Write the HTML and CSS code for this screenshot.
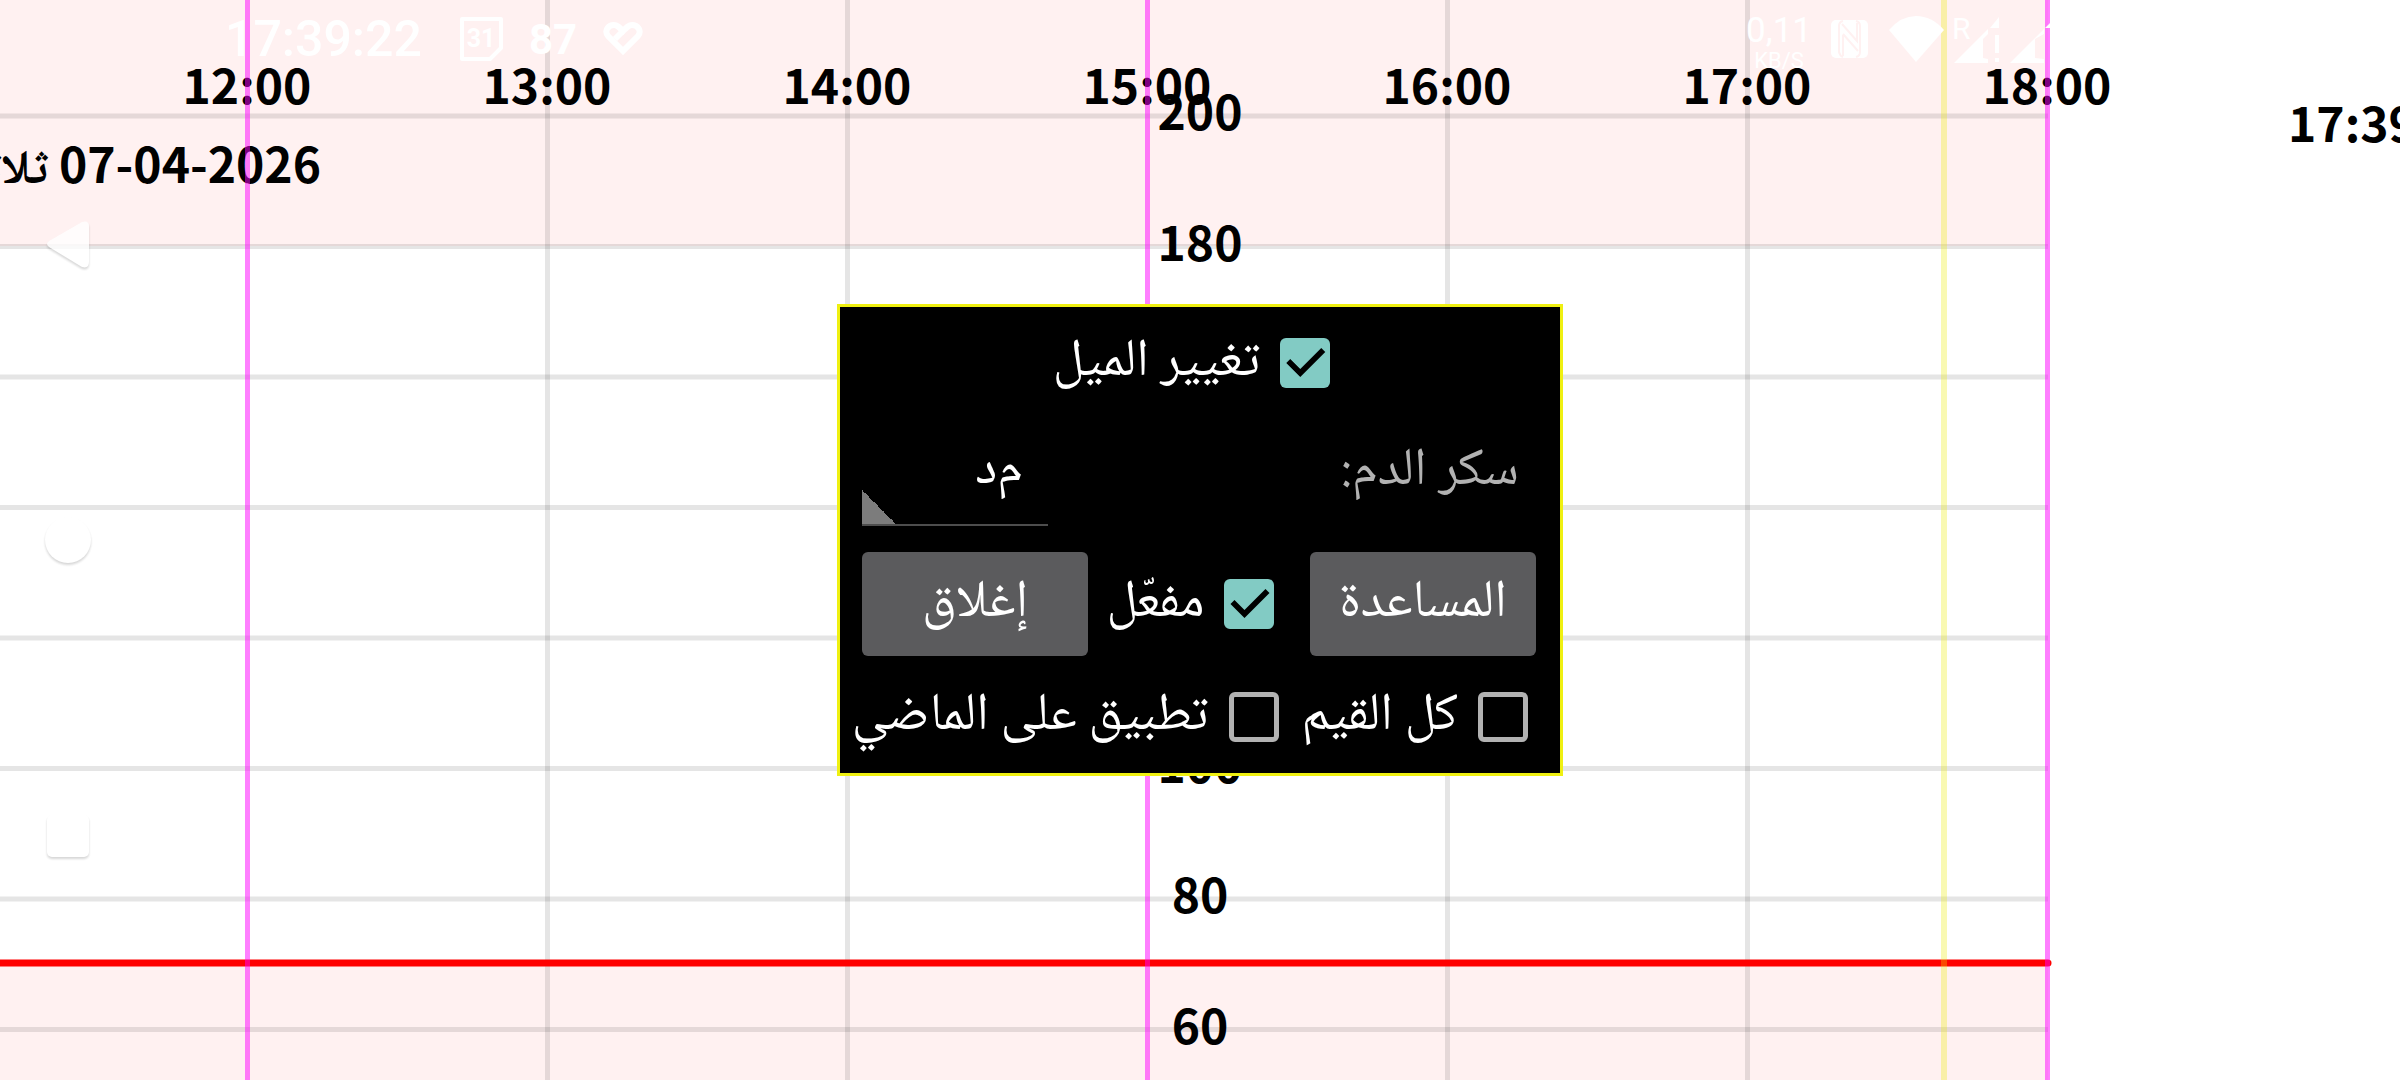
FILE: index.html
```html
<!DOCTYPE html>
<html lang="ar" dir="rtl">
<head>
  <meta charset="UTF-8" />
  <meta name="viewport" content="width=device-width, initial-scale=1.0" />
  <title>سكر الدم</title>
  <link rel="stylesheet" href="styles.css">
</head>
<body>
  <!-- Glucose curve background -->
  <svg class="chart" viewBox="0 0 2400 1080" direction="ltr">
    <rect class="out-of-range" x="0" y="0" width="2048" height="246" />
    <rect class="out-of-range" x="0" y="963" width="2048" height="117" />

    <g class="label">
      <text x="247" y="104">12:00</text>
      <text x="547" y="104">13:00</text>
      <text x="847" y="104">14:00</text>
      <text x="1147" y="104">15:00</text>
      <text x="1447" y="104">16:00</text>
      <text x="1747" y="104">17:00</text>
      <text x="2047" y="104">18:00</text>
      <text x="1200" y="130">200</text>
      <text x="1200" y="261">180</text>
      <text x="1200" y="783">100</text>
      <text x="1200" y="913">80</text>
      <text x="1200" y="1044">60</text>
      <text class="now" x="2288" y="142">17:39</text>
      <text class="date" x="321" y="183">07-04-2026 ثلاثاء</text>
    </g>

    <path class="grid" d="M547.5 0V1080M847.5 0V1080M1447.5 0V1080M1747.5 0V1080" />
    <path class="grid" d="M0 116H2048M0 246.5H2048M0 377H2048M0 507.5H2048M0 638H2048M0 768.5H2048M0 899H2048M0 1029.5H2048" />
    <path class="low" d="M0 963H2048" />
    <path class="current" d="M1944 0V1080" />
    <path class="marker" d="M247.5 0V1080M1147.5 0V1080M2047.5 0V1080" />
  </svg>

  <!-- Status bar -->
  <header class="status">
    <span class="clock">17:39:22</span>
    <svg class="calendar" width="43" height="44" viewBox="0 0 43 44">
      <path d="M2 2H41V31L30 42H2Z" />
      <text x="21" y="30">31</text>
    </svg>
    <span class="battery">87</span>
    <svg class="heart" width="40" height="34" viewBox="0 0 40 34">
      <path d="M20 29L5 14C1 9 5 3 11 3C14 3 16 5 20 9C24 5 26 3 29 3C35 3 39 9 35 14Z" />
      <path d="M20 9L12 17" />
    </svg>

    <div class="right">
      <span class="net"><b>0,11</b><small>KB/S</small></span>
      <svg class="solid nfc" width="37" height="38" viewBox="0 0 37 38">
        <rect width="37" height="38" rx="5" />
        <path d="M12 1Q8 2 8 6V32Q9 36 12 37M12 15V36M11 4L26 21V3M12 14L27 31M25 1Q29 2 29 6V32Q29 36 25 37" />
      </svg>
      <svg class="solid wifi" width="55" height="46" viewBox="0 0 55 46">
        <path d="M0 14Q12 0 27 0Q43 0 55 14L27 46Z" />
      </svg>
      <svg class="solid" width="48" height="48" viewBox="0 0 48 48">
        <text x="0" y="24">R</text>
        <path d="M2 48L36 14V19L31 24V43L36 44V48ZM38 13L47 2V13ZM43 20H47V38H43ZM43 43H47V47H43Z" />
      </svg>
      <svg class="solid" width="48" height="48" viewBox="0 0 48 48">
        <path d="M2 48L36 14V19L27 24V43L36 44V48ZM37 13L48 2V13ZM43 20H47V38H43ZM43 43H47V47H43Z" />
      </svg>
    </div>
  </header>

  <!-- System navigation -->
  <nav class="navigation">
    <button type="button" aria-label="رجوع">
      <svg width="46" height="52" viewBox="0 0 46 52"><path d="M4 23L37 4Q44 2 44 8V44Q44 51 37 49L4 29Q0 26 4 23Z" /></svg>
    </button>
    <button type="button" aria-label="الرئيسية">
      <svg width="46" height="52" viewBox="0 0 46 52"><circle cx="23" cy="26" r="23" /></svg>
    </button>
    <button type="button" aria-label="الأخيرة">
      <svg width="46" height="52" viewBox="0 0 46 52"><rect x="2" y="5" width="42" height="42" rx="5" /></svg>
    </button>
  </nav>

  <!-- Calibration dialog -->
  <main class="screen">
    <form class="dialog">
      <div class="row title-row">
        <label class="check"><input type="checkbox" checked />تغيير الميل</label>
      </div>
      <div class="row glucose-row">
        <label for="unit">سكر الدم:</label>
        <select id="unit" name="unit">
          <option>م&zwnj;د</option>
        </select>
      </div>
      <div class="row button-row">
        <button type="button">المساعدة</button>
        <label class="check"><input type="checkbox" checked />مفعّل</label>
        <button type="button">إغلاق</button>
      </div>
      <div class="row apply-row">
        <label class="check"><input type="checkbox" />كل القيم</label>
        <label class="check"><input type="checkbox" />تطبيق على الماضي</label>
      </div>
    </form>
  </main>
</body>
</html>
```
FILE: styles.css
```css
* {
  box-sizing: border-box;
}
body {
  margin: 0;
  height: 100vh;
  overflow: hidden;
  position: relative;
  background: #fff;
  color: #fff;
  font-family: "Noto Naskh Arabic", "Noto Sans", serif;
  font-size: 53px;
}

/* chart */
.chart {
  display: block;
  width: 100%;
}
.out-of-range {
  fill: #fff1f1;
}
.label {
  font-family: "Noto Sans CJK SC", "Noto Naskh Arabic", sans-serif;
  font-size: 48px;
  font-weight: bold;
  text-anchor: middle;
  fill: #000;
}
.label .now {
  text-anchor: start;
}
.label .date {
  direction: rtl;
  text-anchor: start;
}
.grid {
  stroke: rgba(0, 0, 0, 0.1);
  stroke-width: 5;
}
.low {
  stroke: #f00;
  stroke-width: 7;
  stroke-linecap: round;
}
.current {
  stroke: rgba(235, 235, 0, 0.3);
  stroke-width: 6;
}
.marker {
  stroke: rgba(255, 0, 255, 0.5);
  stroke-width: 5;
}

/* status bar */
.status {
  position: absolute;
  top: 0;
  left: 0;
  right: 0;
  height: 78px;
  padding: 0 344px 0 225px;
  display: flex;
  align-items: center;
  direction: ltr;
  font-family: Roboto, sans-serif;
}
.clock {
  font-size: 50px;
  font-weight: 500;
}
.calendar {
  margin: 0 26px 0 38px;
  fill: none;
  stroke: #fff;
  stroke-width: 4;
  stroke-linejoin: round;
}
.calendar text {
  fill: #fff;
  stroke: none;
  font-size: 25px;
  font-weight: bold;
  text-anchor: middle;
}
.battery {
  font-size: 42px;
  font-weight: bold;
}
.heart {
  margin-left: 26px;
  fill: none;
  stroke: #fff;
  stroke-width: 6;
}
.right {
  margin-left: auto;
  display: flex;
  align-items: center;
  gap: 8px;
}
.net {
  display: flex;
  flex-direction: column;
  align-items: center;
  padding-top: 12px;
}
.net b {
  font-size: 35px;
  font-weight: 400;
  line-height: 32px;
}
.net small {
  font-size: 22px;
  line-height: 28px;
}
.solid {
  fill: #fff;
  font-size: 30px;
}
.nfc {
  margin: 0 13px 0 11px;
}
.nfc path {
  fill: none;
  stroke: #fff1f1;
  stroke-width: 2;
}

/* navigation */
.navigation {
  position: absolute;
  top: 0;
  left: 0;
  width: 136px;
  height: 100%;
  display: flex;
  flex-direction: column;
  align-items: center;
  justify-content: center;
  gap: 244px;
}
.navigation button {
  padding: 0;
  border: none;
  background: none;
  cursor: pointer;
}
.navigation svg {
  display: block;
  overflow: visible;
  fill: #fff;
  opacity: 0.8;
  filter: drop-shadow(0 2px 1px rgba(0, 0, 0, 0.2));
}

/* dialog */
.screen {
  position: absolute;
  inset: 0;
  display: grid;
  place-items: center;
}
.dialog {
  width: 726px;
  padding-bottom: 21px;
  border: 3px solid #eff011;
  background: #000;
}
.row {
  display: flex;
  align-items: center;
  white-space: nowrap;
}
.title-row {
  height: 112px;
  justify-content: center;
}
.glucose-row {
  height: 107px;
  padding: 0 41px 0 22px;
  justify-content: space-between;
  color: #b2b2b2;
}
.button-row {
  height: 156px;
  padding: 0 24px 0 22px;
  justify-content: space-between;
}
.apply-row {
  height: 70px;
  padding: 0 15px;
  gap: 6px;
}
.check {
  display: flex;
  align-items: center;
  gap: 20px;
  padding-right: 17px;
}
.check input {
  appearance: none;
  flex: none;
  width: 50px;
  height: 50px;
  margin: 0;
  border: 5px solid #b2b2b2;
  border-radius: 6px;
}
.check input:checked {
  border: none;
  background: #82cbc4;
}
.check input:checked::before {
  content: "";
  display: block;
  height: 50px;
  background: #000;
  clip-path: polygon(6px 25px, 10px 21px, 20px 31px, 41px 10px, 45px 14px, 20px 39px);
}
.dialog button {
  width: 226px;
  height: 104px;
  padding: 0;
  border: none;
  border-radius: 6px;
  background: #5b5b5d;
  color: #fff;
  font: inherit;
  cursor: pointer;
}
select {
  appearance: none;
  width: 186px;
  height: 107px;
  padding: 0 25px;
  border: none;
  border-bottom: 2px solid #4d4d4d;
  border-radius: 0;
  background: linear-gradient(45deg, #7c7c7c 50%, transparent 50%) left bottom / 34px 34px no-repeat;
  color: #fff;
  font: inherit;
}
```
